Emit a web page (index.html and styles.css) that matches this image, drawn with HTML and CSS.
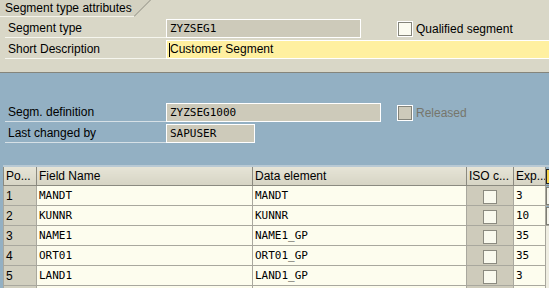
FILE: index.html
```html
<!DOCTYPE html>
<html lang="en">
<head>
    <meta charset="UTF-8">
    <title>Segment type attributes</title>
    <link rel="stylesheet" href="styles.css">
</head>
<body>
    <div class="attrs">
        <div class="tab-strip">
            <div class="tab">Segment type attributes</div>
            <svg class="tab-edge" width="17" height="17" viewBox="0 0 17 17">
                <polygon points="0,0 16,0 0,16" fill="#d3d1c1"/>
                <line x1="0" y1="16.5" x2="16.5" y2="0" stroke="#8c8b80" stroke-width="1"/>
            </svg>
        </div>
        <div class="row">
            <div class="lbl">Segment type</div>
            <div class="field ro seg-type">ZYZSEG1</div>
            <div class="check"><span class="box"></span>Qualified segment</div>
        </div>
        <div class="row">
            <div class="lbl">Short Description</div>
            <div class="field edit grow"><span class="caret"></span>Customer Segment</div>
        </div>
    </div>

    <div class="main">
        <div class="row">
            <div class="lbl">Segm. definition</div>
            <div class="field ro seg-def">ZYZSEG1000</div>
            <div class="check off"><span class="box"></span>Released</div>
        </div>
        <div class="row">
            <div class="lbl">Last changed by</div>
            <div class="field ro user">SAPUSER</div>
        </div>

        <table class="grid">
            <colgroup>
                <col class="c-pos">
                <col class="c-name">
                <col class="c-elem">
                <col class="c-iso">
                <col class="c-exp">
                <col class="c-tool">
            </colgroup>
            <thead>
                <tr>
                    <th>Po...</th>
                    <th>Field Name</th>
                    <th>Data element</th>
                    <th>ISO c...</th>
                    <th>Exp...</th>
                    <th class="tool"><span class="cfg"></span></th>
                </tr>
            </thead>
            <tbody>
                <tr>
                    <td class="pos">1</td><td>MANDT</td><td>MANDT</td>
                    <td class="iso"><span class="box"></span></td><td>3</td><td class="tool"><span class="btn"></span></td>
                </tr>
                <tr>
                    <td class="pos">2</td><td>KUNNR</td><td>KUNNR</td>
                    <td class="iso"><span class="box"></span></td><td>10</td><td class="tool"><span class="btn"></span></td>
                </tr>
                <tr>
                    <td class="pos">3</td><td>NAME1</td><td>NAME1_GP</td>
                    <td class="iso"><span class="box"></span></td><td>35</td><td class="tool bar"></td>
                </tr>
                <tr>
                    <td class="pos">4</td><td>ORT01</td><td>ORT01_GP</td>
                    <td class="iso"><span class="box"></span></td><td>35</td><td class="tool bar"></td>
                </tr>
                <tr>
                    <td class="pos">5</td><td>LAND1</td><td>LAND1_GP</td>
                    <td class="iso"><span class="box"></span></td><td>3</td><td class="tool bar"></td>
                </tr>
                <tr>
                    <td class="pos"></td><td></td><td></td>
                    <td class="iso"></td><td></td><td class="tool bar"></td>
                </tr>
            </tbody>
        </table>
    </div>
</body>
</html>
```

FILE: styles.css
```css
body {
    margin: 0;
    padding: 0;
    width: 549px;
    height: 288px;
    overflow: hidden;
    font-family: "Liberation Sans", Arial, sans-serif;
    font-size: 12px;
    color: #000;
    background-color: #93b0c3;
}
.attrs {
    background-color: #d9d7c7;
    height: 72px;
    border-bottom: 1px solid #85857b;
}
.tab-strip {
    display: flex;
    height: 17px;
}
.tab {
    width: 129px;
    height: 16px;
    padding-left: 5px;
    line-height: 17px;
    background-color: #d3d1c1;
    border-bottom: 1px solid #f4f3ea;
}
.tab-edge {
    display: block;
}
.row {
    display: flex;
    align-items: flex-end;
    height: 21px;
}
.lbl {
    box-sizing: border-box;
    width: 161px;
    margin-left: 5px;
    padding: 2px 0 0 3px;
    height: 20px;
    line-height: 17px;
    border-bottom: 1px solid #f6f6ee;
}
.field {
    box-sizing: border-box;
    height: 19px;
    padding-left: 3px;
    border: 1px solid #fff;
    font-family: "DejaVu Sans Mono", monospace;
    font-size: 11px;
    line-height: 17px;
}
.ro {
    background-color: #cdcaba;
}
.edit {
    position: relative;
    background-color: #fff0a0;
    font-family: "Liberation Sans", Arial, sans-serif;
    font-size: 12px;
    border-right: none;
}
.grow {
    flex: 1;
}
.caret {
    position: absolute;
    left: 2px;
    top: 2px;
    width: 1px;
    height: 14px;
    background-color: #000;
}
.seg-type {
    width: 195px;
}
.seg-def {
    width: 215px;
}
.user {
    width: 89px;
}
.check {
    display: flex;
    align-items: center;
    height: 21px;
    margin: 1px 0 0 37px;
    align-self: flex-start;
}
.seg-def + .check {
    margin-left: 17px;
}
.check .box {
    box-sizing: border-box;
    width: 14px;
    height: 14px;
    margin-right: 4px;
    background-color: #fbfbf0;
    border: 1px solid #84847a;
    box-shadow: 0 0 0 1px #fff;
}
.check.off {
    color: #76766c;
}
.check.off .box {
    background-color: #cdcaba;
}
.main {
    padding-top: 28px;
}
.main .lbl {
    border-bottom-color: #d6e0e6;
}
.grid {
    margin: 22px 0 0 3px;
    width: 546px;
    table-layout: fixed;
    border-collapse: collapse;
    border-top: 2px solid #b8c9d4;
    border-left: 1px solid #6f8898;
}
.c-pos { width: 33px; }
.c-name { width: 216px; }
.c-elem { width: 214px; }
.c-iso { width: 47px; }
.c-exp { width: 32px; }
.c-tool { width: 4px; }
.grid th {
    height: 18px;
    padding: 0 0 0 2px;
    text-align: left;
    font-weight: normal;
    white-space: nowrap;
    overflow: hidden;
    background: linear-gradient(#e6e4d6, #d6d4c4);
    border: 1px solid #8b8a80;
    border-top-color: #fdfdf6;
}
.grid td {
    height: 19px;
    padding: 0 0 0 2px;
    background-color: #fdfdee;
    border: 1px solid #a9a89e;
    font-family: "DejaVu Sans Mono", monospace;
    font-size: 11px;
    white-space: nowrap;
    overflow: hidden;
}
.grid td.pos {
    background-color: #d1cfbf;
    font-family: "Liberation Sans", Arial, sans-serif;
    font-size: 12px;
}
.grid td.iso {
    background-color: #cecbbb;
    padding: 0;
    text-align: center;
}
.iso .box {
    display: inline-block;
    box-sizing: border-box;
    width: 14px;
    height: 14px;
    margin-top: 2px;
    vertical-align: top;
    background-color: #f9f9ee;
    border: 1px solid #8b8a80;
}
.grid .tool {
    padding: 0;
    border-right: none;
    background: #93b0c3;
}
.cfg {
    display: block;
    width: 4px;
    height: 13px;
    margin-top: 1px;
    background-color: #f4d34a;
    border: 1px solid #222;
    border-right: none;
}
.btn {
    display: block;
    width: 3px;
    height: 16px;
    background-color: #f4f4ea;
    border: 1px solid #7d7d74;
    border-right: none;
}
.grid td.bar {
    background-color: #efeee2;
    border-left: 1px solid #7d7d74;
    border-top: none;
    border-bottom: none;
}
```
